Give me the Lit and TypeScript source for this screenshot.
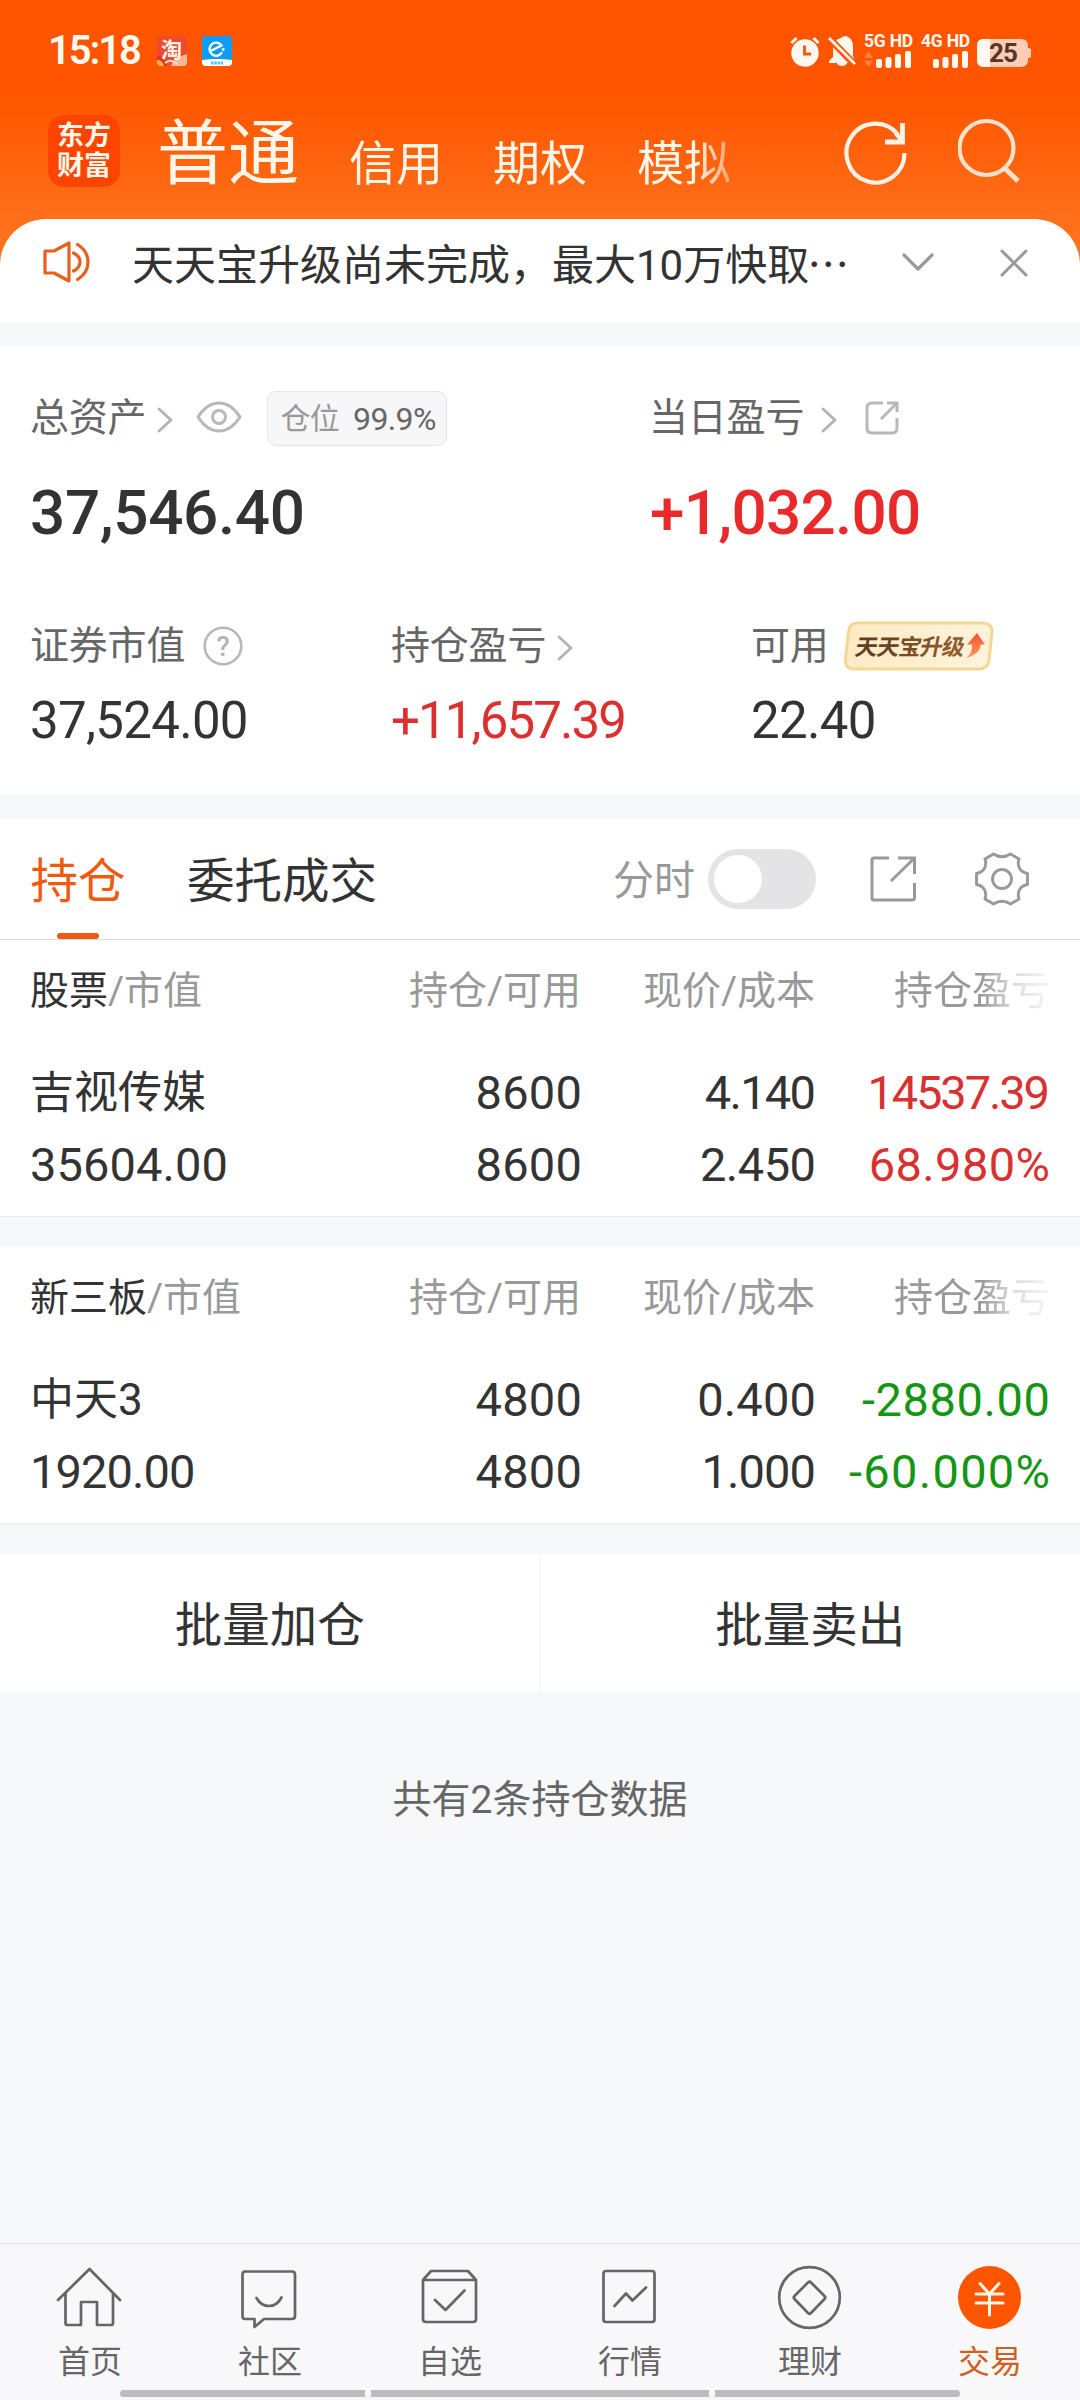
import { LitElement, html, css, svg } from "lit";
import { customElement, property } from "lit/decorators.js";
import { styleMap } from "lit/directives/style-map.js";

const chevronRight = html`<svg class="chev" width="16" height="26" viewBox="0 0 16 26" fill="none" stroke="#b3b3b3" stroke-width="2.8" stroke-linecap="round" stroke-linejoin="round"><path d="M2 2L14 13L2 24" /></svg>`;

const tabIcons: Record<string, unknown> = {
  home: svg`<path d="M4 35L35.500 4L66 35M11.500 28V58Q11.500 60 13.500 60H27V37H43V60H57Q59 60 59 58V28" />`,
  chat: svg`<path d="M11 6.500H58Q61 6.500 61 9.500V51Q61 54 58 54H30L20.500 62V54H11Q8.500 54 8.500 51V9.500Q8.500 6.500 11 6.500ZM22.500 33Q27 41 35 41T47.500 32.500" />`,
  pick: svg`<path d="M9 15L17 6H54L62 15V54Q62 57 59 57H12Q9 57 9 54ZM9 15H62M21 35L31.500 45L50.500 25.500" />`,
  market: svg`<rect x="9.500" y="6" width="51" height="51" rx="2.500"/><path d="M20.500 41L32 28.500L38.500 35.500L52 22.500" />`,
  wealth: svg`<circle cx="35.500" cy="32.500" r="30.300"/><path d="M34 17.500Q35.500 16 37 17.500L50.500 31Q52 32.500 50.500 34L37 48Q35.500 49.500 34 48L20.500 34Q19 32.500 20.500 31Z" />`,
  trade: svg`<circle cx="35.500" cy="32.500" r="31.500" fill="#ff5500" stroke="none"/><path stroke="#fff5ea" stroke-width="3" d="M26 18.500L35.500 29L45 18.500M22 29H49M22 38H49M35.500 29V50" />`,
};

@customElement("status-bar")
export class StatusBar extends LitElement {
  static styles = css`
    :host { display: block; }
    .bar { height: 102px; box-sizing: border-box; padding: 30px 48px 0 48px; display: flex; align-items: flex-start; color: #fff8ee; font-family: Roboto, "Noto Sans CJK SC", sans-serif; }
    .time { font-size: 40px; line-height: 42px; font-weight: 600; letter-spacing: -2.1px; width: 109px; }
    .tao { width: 30px; height: 30px; margin-top: 6px; overflow: visible; }
    .ele { margin: 6px 0 0 15px; }
    .right { margin-left: auto; display: flex; margin-right: 1px; }
    .alarm { margin: 6px 8px 0 0; }
    .bell { margin: 5px 8px 0 0; }
    .net { width: 57px; margin-top: 2px; }
    .net.second { width: 56px; }
    .name { display: block; font-size: 17.500px; font-weight: 700; line-height: 18px; white-space: nowrap; letter-spacing: -0.2px; }
    .bars { display: block; margin-top: 1px; }
    .battery { margin-top: 9px; position: relative; width: 54px; height: 28px; }
    .level { position: absolute; left: 12px; top: 0; font-size: 26px; line-height: 28px; font-weight: 700; color: #54362a; letter-spacing: -0.8px; }
  `;

  private signal(name: string, arrows: boolean, cls: string) {
    return html`<div class="net ${cls}">
      <span class="name">${name}</span>
      <svg class="bars" width="48" height="17" viewBox="0 0 48 17" fill="#fff8ee">
        ${arrows ? svg`<path fill="#ff7f45" d="M0 7L4.500 0L9 7ZM0 9.500H9L4.500 16Z" />` : ""}
        <rect x="12" y="8" width="6" height="9" rx="2" /><rect x="21.500" y="6" width="6" height="11" rx="2" />
        <rect x="31" y="3" width="6" height="14" rx="2" /><rect x="41" y="0" width="6" height="17" rx="2" />
      </svg>
    </div>`;
  }

  render() {
    return html`<div class="bar">
      <span class="time">15:18</span>
      <svg class="tao" viewBox="0 0 30 30">
        <rect width="30" height="30" rx="4" fill="#ee4a2c" /><path d="M0 20Q8 19 10 30H4Q0 30 0 26Z" fill="#e2322b" /><path d="M0 24Q5 23 7 30H4Q0 30 0 26Z" fill="#ffb52e" />
        <path d="M14 30Q16 22 30 18V26Q30 30 26 30Z" fill="#f7b79b" /><path d="M8 27Q14 22 20 28" stroke="#fbe0cd" stroke-width="2" fill="none" />
        <text x="4" y="20.500" font-size="21" font-weight="700" fill="#fffaf0" font-family="Noto Sans CJK SC">淘</text>
      </svg>
      <svg class="ele" width="30" height="30" viewBox="0 0 30 30">
        <rect width="30" height="30" rx="4" fill="#0f9cf5" /><path d="M0 24Q15 22 30 24V26Q30 30 26 30H4Q0 30 0 26Z" fill="#fff" />
        <path d="M9.500 14.500L19.500 9.500A6.600 6.600 0 1 0 19.500 17" fill="none" stroke="#fff" stroke-width="2.300" stroke-linecap="round" /><circle cx="21.200" cy="13.500" r="1.400" fill="#fff" />
        <path d="M9 27H21" stroke="#5fb8f3" stroke-width="3" stroke-dasharray="2.500 .8" />
      </svg>
      <div class="right">
        <svg class="alarm" width="30" height="31" viewBox="0 0 30 31"><circle cx="15" cy="17" r="13.700" fill="#fff8ee" /><path d="M1.500 7L6.500 2M28.500 7L23.500 2" stroke="#fff8ee" stroke-width="3" /><path d="M14.500 9.500V18H21" fill="none" stroke="#ff5500" stroke-width="2.800" /></svg>
        <svg class="bell" width="28" height="32" viewBox="0 0 28 32"><path d="M5 22V12Q5 5 12 3.500Q14 1 18 1Q25 3 25 12V21L27 26V28H19Q18 31 14 31T9 28H1V26Z" fill="#fff8ee" /><path d="M0 2L27 30" stroke="#ff5500" stroke-width="7" /><path d="M1 3L27 29" stroke="#fff8ee" stroke-width="2.600" /></svg>
        ${this.signal("5G HD", true, "")} ${this.signal("4G HD", false, "second")}
        <div class="battery">
          <svg width="54" height="28" viewBox="0 0 54 28"><path fill="#ffcdb5" d="M7 0H44Q51 0 51 7V9Q54 9 54 11V17Q54 19 51 19V21Q51 28 44 28H7Q0 28 0 21V7Q0 0 7 0Z" /><path fill="#fff8f0" d="M7 0H13V28H7Q0 28 0 21V7Q0 0 7 0Z" /></svg>
          <span class="level">25</span>
        </div>
      </div>
    </div>`;
  }
}

interface Cell { text: string; track: number; }
interface Holding { name: string; value: Cell; cells: [Cell, Cell][]; tone: string; }

@customElement("holding-table")
export class HoldingTable extends LitElement {
  @property() kind = "";
  @property({ attribute: false }) row!: Holding;

  static styles = css`
    :host { display: block; background: #fff; border-bottom: 1px solid #ececee; font-family: Roboto, "Noto Sans CJK SC", sans-serif; color: #333; }
    .grid { display: grid; grid-template-columns: 302px 250px 234px 234px; padding: 0 30px; white-space: nowrap; }
    .head { height: 100px; line-height: 103px; font-size: 39px; color: #999; }
    .head .num { padding-right: 1px; }
    .kind { color: #333; }
    .body { padding-top: 17px; padding-bottom: 15px; }
    .line { height: 72px; line-height: 72px; font-size: 47px; }
    .name { font-size: 44px; }
    .num { text-align: right; display: flex; flex-direction: column; align-items: flex-end; }
    .head .fade { padding-right: 0; -webkit-mask-image: linear-gradient(90deg, #000 165px, rgba(0, 0, 0, 0.35) 198px, transparent 245px); mask-image: linear-gradient(90deg, #000 165px, rgba(0, 0, 0, 0.35) 198px, transparent 245px); }
    .up { color: #d93030; }
    .down { color: #149614; }
  `;

  private cell(c: Cell) {
    return html`<div class="line" style=${styleMap({ letterSpacing: `${c.track}px`, marginRight: `${-c.track}px` })}>${c.text}</div>`;
  }

  render() {
    const r = this.row;
    return html`
      <div class="grid head">
        <div><span class="kind">${this.kind}</span>/市值</div>
        <div class="num">持仓/可用</div><div class="num">现价/成本</div><div class="num fade">持仓盈亏</div>
      </div>
      <div class="grid body">
        <div><div class="line name">${r.name}</div>${this.cell(r.value)}</div>
        ${r.cells.map((pair, i) => html`<div class="num ${i === 2 ? r.tone : ""}">${pair.map((c) => this.cell(c))}</div>`)}
      </div>`;
  }
}

const c = (text: string, track = 0): Cell => ({ text, track });

const stocks: Holding = {
  name: "吉视传媒", value: c("35604.00", 0.1), tone: "up",
  cells: [[c("8600", 0.3), c("8600", 0.3)], [c("4.140", -1.7), c("2.450", -0.5)], [c("14537.39", -2.1), c("68.980%", 0.4)]],
};
const otc: Holding = {
  name: "中天3", value: c("1920.00", -0.9), tone: "down",
  cells: [[c("4800", 0.3), c("4800", 0.3)], [c("0.400", 0.2), c("1.000", -0.9)], [c("-2880.00", 0.6), c("-60.000%", 1.3)]],
};

@customElement("app-root")
export class AppRoot extends LitElement {
  static styles = css`
    :host { display: block; font-family: Roboto, "Noto Sans CJK SC", sans-serif; color: #333; }
    .page { width: 1080px; height: 2400px; display: flex; flex-direction: column; background: #f7f8fa; overflow: hidden; white-space: nowrap; }
    svg { display: block; flex: none; }
    .hero { background: linear-gradient(180deg, #ff5500 0, #ff5500 96px, #ff6e18 215px, #ff7520 270px); }
    .top { height: 117px; display: flex; box-sizing: border-box; padding-left: 48px; color: #fff6ea; }
    .logo { width: 72px; height: 72px; margin-top: 13px; border-radius: 16px; background: #ff4400; box-sizing: border-box; padding: 6px 0 0 9px; font-size: 27px; line-height: 30px; font-weight: 700; }
    .modes { display: flex; align-items: flex-start; margin-left: 37px; width: 594px; height: 117px; font-size: 47px; line-height: 123px; gap: 50px; -webkit-mask-image: linear-gradient(90deg, #000 538px, transparent 600px); mask-image: linear-gradient(90deg, #000 538px, transparent 600px); }
    .active { font-size: 71px; line-height: 103px; }
    .refresh { margin: 16px 0 0 93px; }
    .search { margin: 16px 0 0 50px; }
    .notice { height: 103px; background: #fff; border-radius: 46px 46px 0 0; display: flex; box-sizing: border-box; padding: 15px 52px 0 43px; font-size: 42px; line-height: 55px; }
    .speaker { margin: 6px 42px 0 0; }
    .dots { font-family: "Noto Sans CJK SC", sans-serif; margin-left: -2px; }
    .down { margin: 19px 0 0 auto; }
    .close { margin: 15px 0 0 66px; }
    .summary { height: 449px; margin-top: 24px; background: #fff; box-sizing: border-box; padding: 41px 30px 0; }
    .pair { display: grid; grid-template-columns: 619px 1fr; }
    .trio { display: grid; grid-template-columns: 361px 360px 1fr; margin-top: 67px; }
    .label { display: flex; align-items: center; height: 62px; font-size: 39px; line-height: 62px; letter-spacing: -0.2px; color: #666; }
    .trio .label { height: 54px; line-height: 54px; }
    .big { height: 80px; line-height: 82px; margin-top: 23px; font-size: 62px; font-weight: 500; letter-spacing: -0.35px; }
    .big.red { letter-spacing: -0.7px; padding-left: 1px; }
    .mid { height: 60px; line-height: 60px; margin-top: 18px; font-size: 51px; letter-spacing: -0.7px; }
    .mid.tight { letter-spacing: -1.9px; }
    .red { color: #e92a2a; }
    .softred { color: #dc3030; }
    .label .chev { margin: 3px 0 0 11px; }
    .eye { margin: -3px 25px 0 23px; }
    .ratio { height: 55px; width: 180px; box-sizing: border-box; border: 1px solid #e4e4e6; border-radius: 9px; background: #f7f7f9; padding: 0 0 0 12px; line-height: 54px; font-size: 30px; letter-spacing: -0.7px; color: #999; display: flex; }
    .pct { margin-left: 14px; font-size: 32px; color: #666; letter-spacing: -0.6px; }
    .share { margin-left: 28px; }
    .label .gap { margin-left: 6px; }
    .help { margin-left: 18px; }
    .promo { margin-left: 14px; }
    .tabs { margin-top: 24px; height: 121px; background: #fff; border-bottom: 1px solid #dcdcdd; box-sizing: border-box; display: flex; align-items: flex-start; padding: 0 51px 0 30px; font-size: 47.500px; line-height: 126px; }
    .tab { width: 96px; height: 120px; color: #f05a10; display: flex; flex-direction: column; align-items: center; margin-right: 61px; }
    .tab .txt { height: 114px; }
    .mark { width: 42px; height: 6px; border-radius: 3px; background: #f05a10; flex: none; }
    .intraday { margin-left: auto; font-size: 41px; line-height: 124px; color: #999; }
    .toggle { width: 108px; height: 60px; border-radius: 30px; background: #e4e4e6; margin: 30px 0 0 13px; box-sizing: border-box; padding: 6px; }
    .knob { width: 48px; height: 48px; border-radius: 50%; background: #fff; }
    .open { margin: 37px 0 0 54px; }
    .gear { margin: 33px 0 0 58px; }
    .second { margin-top: 30px; }
    .actions { margin-top: 30px; height: 138px; background: #fff; display: flex; font-size: 47.500px; line-height: 144px; text-align: center; }
    .action { flex: 1; }
    .action + .action { border-left: 1px solid #f5f5f7; }
    .total { margin-top: 78px; text-align: center; font-size: 39px; line-height: 60px; color: #666; }
    .nav { margin-top: auto; height: 157px; border-top: 1px solid #e4e4e6; background: #f8f8fa; box-sizing: border-box; }
    .items { display: grid; grid-template-columns: repeat(6, 180px); height: 146px; }
    .item { display: flex; flex-direction: column; align-items: center; padding-top: 21px; color: #666; font-size: 32px; line-height: 40px; gap: 11px; }
    .item svg { margin-right: 1px; }
    .item.on { color: #cf6020; }
    .home { display: grid; grid-template-columns: 245px 338px 245px; gap: 6px; padding-left: 120px; height: 7px; }
    .home .seg { background: #bcbcbc; }
    .home .seg:first-child { border-radius: 4px 0 0 4px; }
    .home .seg:last-child { border-radius: 0 4px 4px 0; }
  `;

  private item(icon: string, label: string, on = false) {
    return html`<div class="item ${on ? "on" : ""}">
      <svg width="71" height="66" viewBox="0 0 71 66" fill="none" stroke="#666" stroke-width="2.700" stroke-linecap="round" stroke-linejoin="round">${tabIcons[icon]}</svg>
      <span>${label}</span>
    </div>`;
  }

  render() {
    return html`<div class="page">
      <div class="hero">
        <status-bar></status-bar>
        <div class="top">
          <div class="logo">东方<br />财富</div>
          <div class="modes"><span class="active">普通</span><span>信用</span><span>期权</span><span>模拟</span></div>
          <svg class="refresh" width="64" height="68" viewBox="0 0 64 68" fill="none" stroke="#fff3e6" stroke-width="4.200"><path d="M60.500 35A29 29.500 0 1 1 54 16.500" /><path d="M58.500 5V24H41" stroke-width="4.800" /><path d="M51.500 15L59.500 24" /></svg>
          <svg class="search" width="64" height="68" viewBox="0 0 64 68" fill="none" stroke="#ffe2cb" stroke-width="4.200"><circle cx="28.500" cy="30" r="27" /><path d="M46.500 50L60 63" stroke-width="5" /></svg>
        </div>
        <div class="notice">
          <svg class="speaker" width="47" height="44" viewBox="0 0 47 44" fill="none" stroke="#e8601c" stroke-width="3.200" stroke-linejoin="round" stroke-linecap="round"><path d="M2 11H11L26 3V41L11 33H2ZM30.500 13Q37 16 37 22T30.500 31M34.500 4.500Q45 11 45 22T34.500 39.500" /></svg>
          <span>天天宝升级尚未完成，最大10万快取<span class="dots">…</span></span>
          <svg class="down" width="32" height="20" viewBox="0 0 32 20" fill="none" stroke="#999" stroke-width="3.200" stroke-linecap="round" stroke-linejoin="round"><path d="M2 2L16 16L30 2" /></svg>
          <svg class="close" width="28" height="28" viewBox="0 0 28 28" fill="none" stroke="#999" stroke-width="3" stroke-linecap="round"><path d="M2 2L26 26M26 2L2 26" /></svg>
        </div>
      </div>

      <div class="summary">
        <div class="pair">
          <div>
            <div class="label">总资产${chevronRight}
              <svg class="eye" width="46" height="32" viewBox="0 0 46 32" fill="none" stroke="#b8b8b8" stroke-width="3"><path d="M2 16Q11 2 23 2T44 16Q35 30 23 30T2 16Z" stroke-linejoin="round" /><circle cx="23" cy="16" r="6.500" /></svg>
              <div class="ratio">仓位<span class="pct">99.9%</span></div>
            </div>
            <div class="big">37,546.40</div>
          </div>
          <div>
            <div class="label">当日盈亏<span class="gap"></span>${chevronRight}
              <svg class="share" width="34" height="34" viewBox="0 0 34 34" fill="none" stroke="#b8b8b8" stroke-width="3"><path d="M18 2H7Q2 2 2 7V27Q2 32 7 32H27Q32 32 32 27V17M22 2H32V11M32 2L16 18" /></svg>
            </div>
            <div class="big red">+1,032.00</div>
          </div>
        </div>
        <div class="trio">
          <div>
            <div class="label">证券市值
              <svg class="help" width="40" height="40" viewBox="0 0 40 40"><circle cx="20" cy="20" r="18.300" fill="none" stroke="#b8b8b8" stroke-width="2.600" /><text x="20" y="30" text-anchor="middle" font-family="Roboto" font-size="27" font-weight="500" fill="#b3b3b3">?</text></svg>
            </div>
            <div class="mid">37,524.00</div>
          </div>
          <div>
            <div class="label">持仓盈亏${chevronRight}</div>
            <div class="mid tight softred">+11,657.39</div>
          </div>
          <div>
            <div class="label">可用
              <svg class="promo" width="152" height="52" viewBox="0 0 152 52">
                <defs>
                  <linearGradient id="gold"><stop offset="0" stop-color="#fdebc4" /><stop offset="1" stop-color="#fff3dc" /></linearGradient>
                  <linearGradient id="brown"><stop offset="0" stop-color="#5c3a20" /><stop offset="1" stop-color="#94602e" /></linearGradient>
                  <linearGradient id="arrow" x1="0" y1="0" x2="0" y2="1"><stop offset="0" stop-color="#f4502e" /><stop offset="1" stop-color="#ff9a62" /></linearGradient>
                </defs>
                <path d="M14 3H139Q149.500 3 149 12L146 40Q145 49 136 49H11Q1.500 49 2.500 39L5.500 12Q6.500 3 14 3Z" fill="url(#gold)" stroke="#f5d793" stroke-width="3" />
                <text transform="translate(11 34.500) skewX(-11)" font-family="Noto Sans CJK SC" font-size="22.500" font-weight="700" letter-spacing="-0.800" fill="url(#brown)">天天宝升级</text>
                <path d="M134 13L142 24.500H137.500Q138 33 123.500 38Q130 32 129 24.500H124Z" fill="url(#arrow)" />
              </svg>
            </div>
            <div class="mid">22.40</div>
          </div>
        </div>
      </div>

      <div class="tabs">
        <div class="tab"><span class="txt">持仓</span><span class="mark"></span></div>
        <span>委托成交</span>
        <span class="intraday">分时</span>
        <div class="toggle"><div class="knob"></div></div>
        <svg class="open" width="47" height="46" viewBox="0 0 47 46" fill="none" stroke="#999" stroke-width="3"><path d="M19 2H4Q2 2 2 4V42Q2 44 4 44H42Q44.500 44 44.500 42V27M28 2H44.500V18M43.500 3L21 25" /></svg>
        <svg class="gear" width="54" height="54" viewBox="0 0 54 54" fill="none" stroke="#999" stroke-width="2.900" stroke-linejoin="round"><path d="M18.500 2Q27 7.500 35.500 2L44 7C42 13 44 20 52.500 21.500V32.500C44 34 42 41 44 47L35.500 52Q27 46.500 18.500 52L10 47C12 41 10 34 1.500 32.500V21.500C10 20 12 13 10 7Z" /><circle cx="27" cy="27" r="9.500" /></svg>
      </div>
      <holding-table .kind=${"股票"} .row=${stocks}></holding-table>
      <holding-table class="second" .kind=${"新三板"} .row=${otc}></holding-table>
      <div class="actions"><div class="action">批量加仓</div><div class="action">批量卖出</div></div>
      <div class="total">共有2条持仓数据</div>

      <div class="nav">
        <div class="items">
          ${this.item("home", "首页")}${this.item("chat", "社区")}${this.item("pick", "自选")}
          ${this.item("market", "行情")}${this.item("wealth", "理财")}${this.item("trade", "交易", true)}
        </div>
        <div class="home"><div class="seg"></div><div class="seg"></div><div class="seg"></div></div>
      </div>
    </div>`;
  }
}
